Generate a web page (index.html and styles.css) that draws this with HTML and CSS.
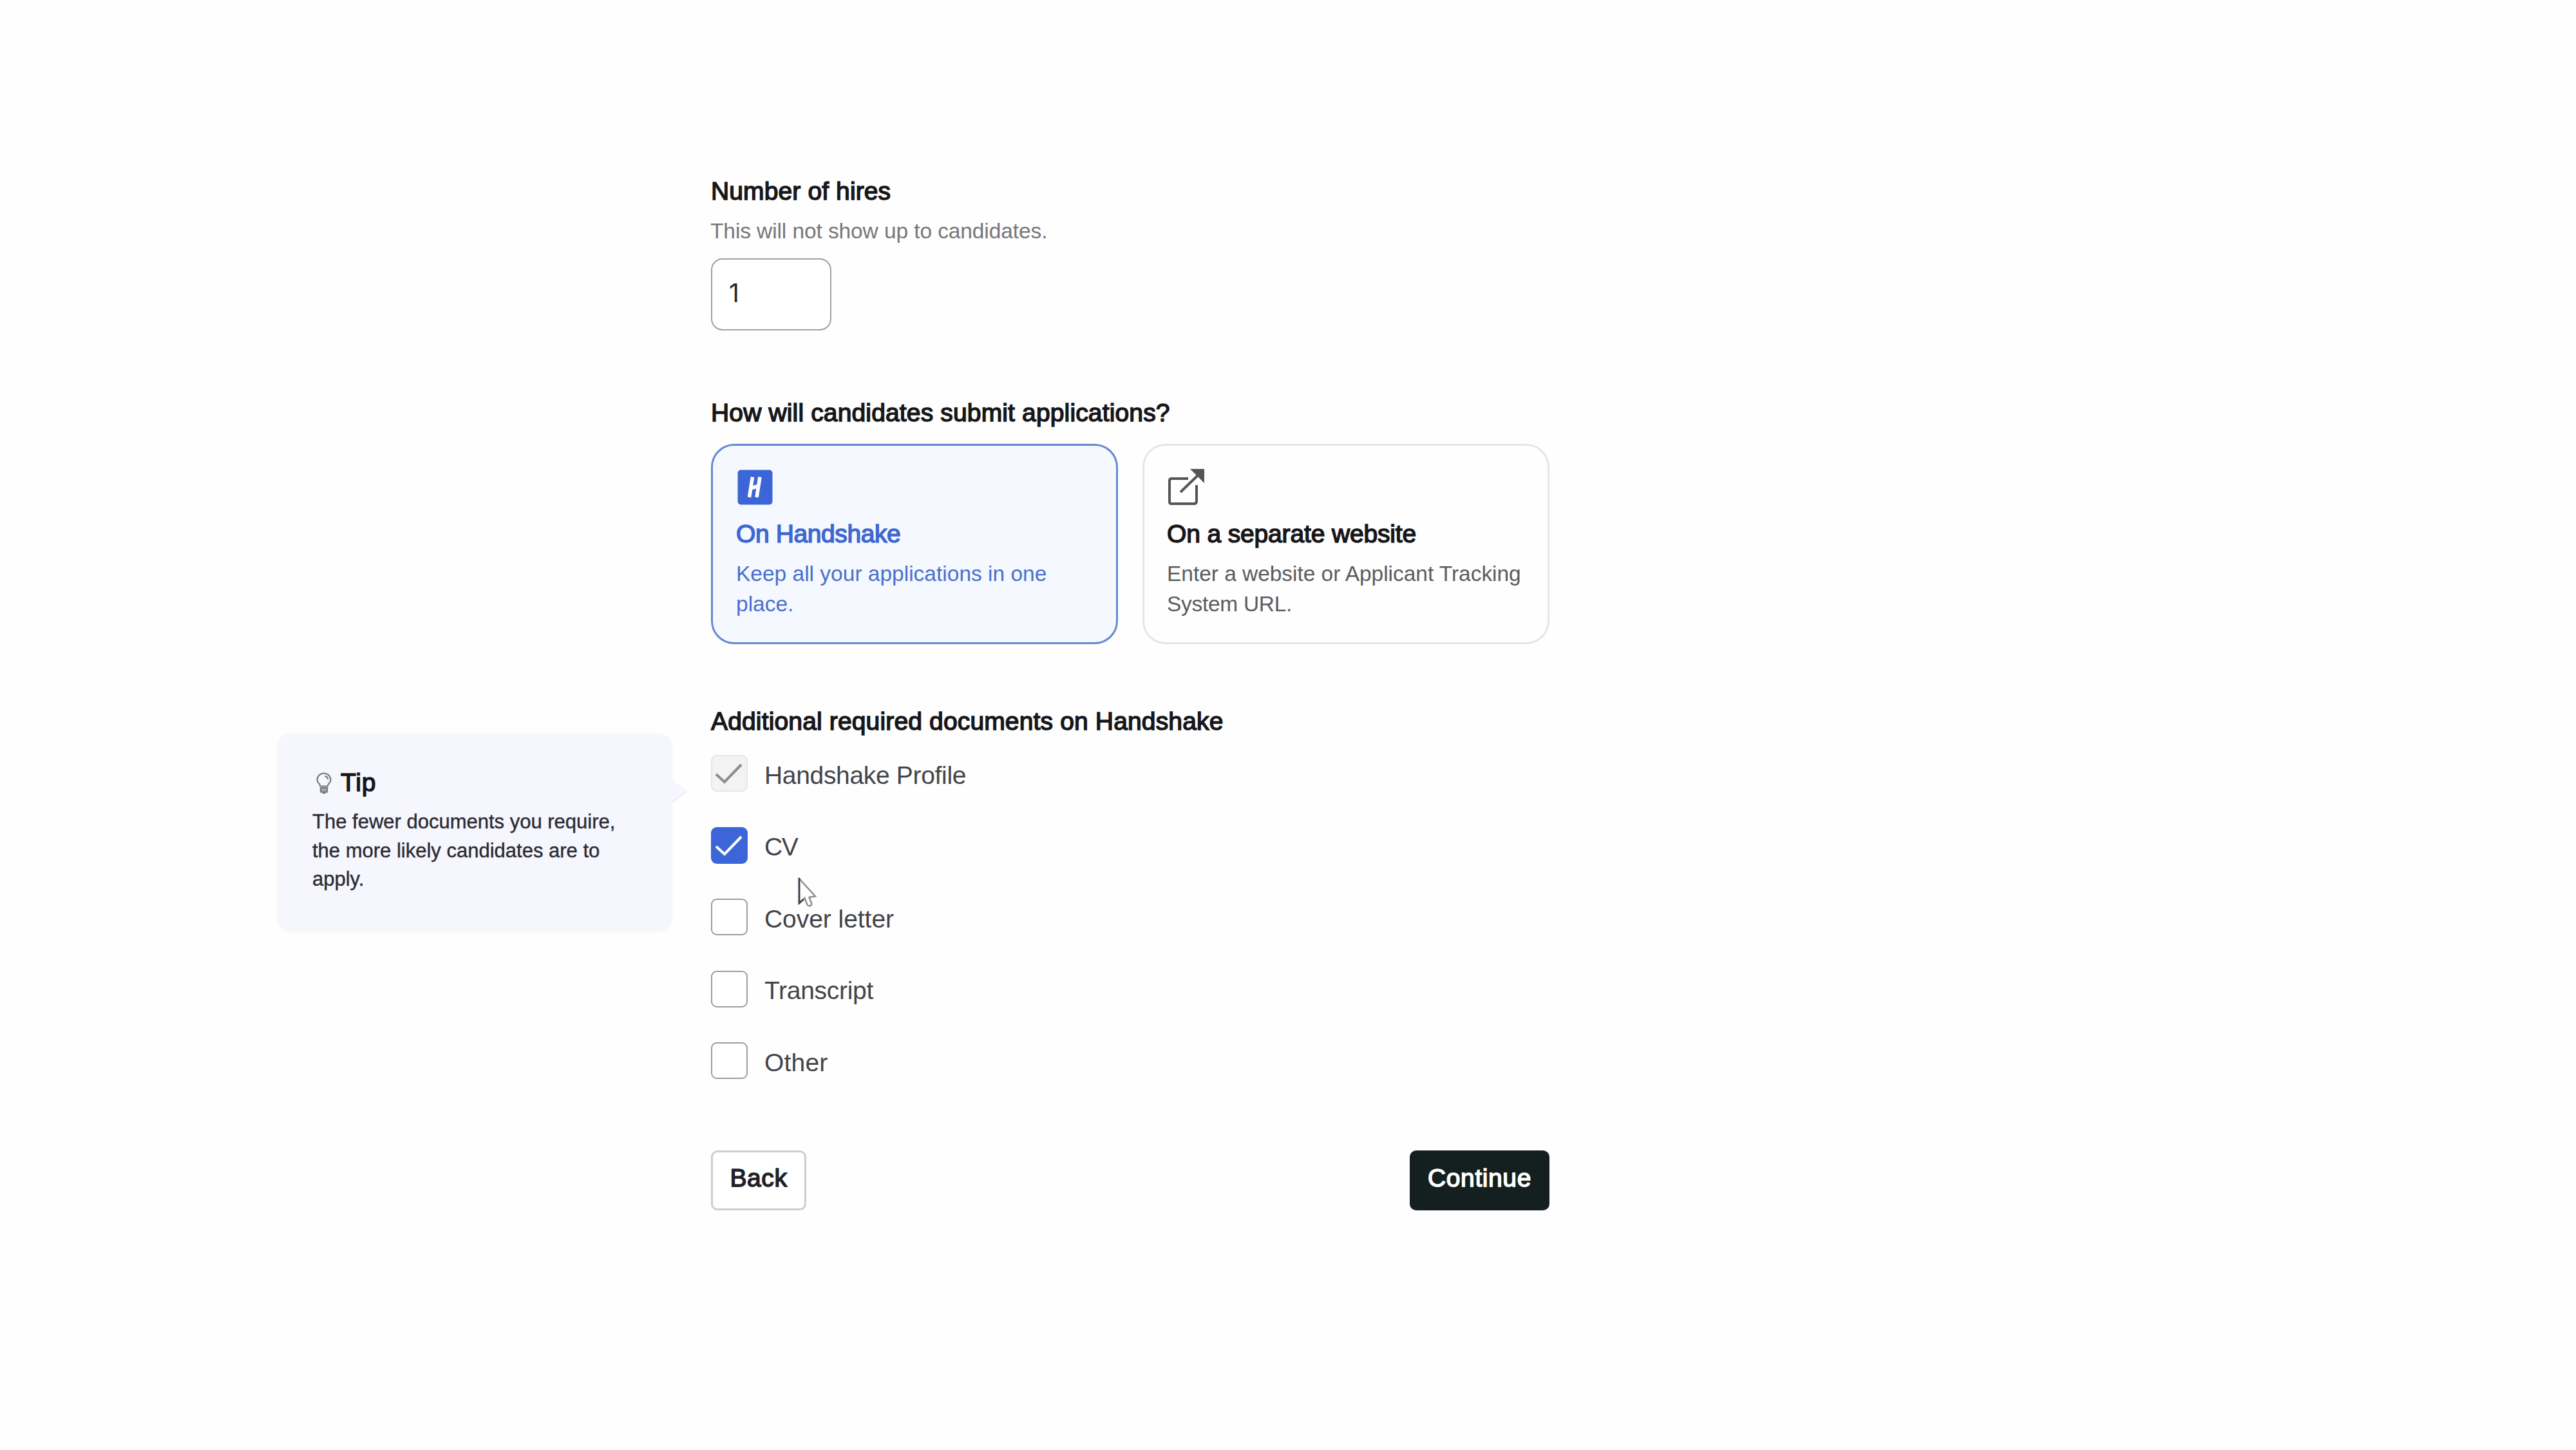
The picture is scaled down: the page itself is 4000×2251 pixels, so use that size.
FILE: index.html
```html
<!DOCTYPE html>
<html lang="en">
<head>
<meta charset="utf-8">
<title>Job posting</title>
<link rel="stylesheet" href="styles.css">
</head>
<body>
<main class="page">
  <aside class="tip">
    <div class="tip-heading">
      <svg class="bulb" viewBox="0 0 28 34" fill="none" stroke="#77777f" stroke-width="2.2">
        <path d="M8.5 21.5C8 18 3.5 16 3.5 11.5a10.500 10 0 0 1 21 0c0 4.500-4.500 6.500-5 10z"/>
        <path d="M15 6c3 0 5 2 5 5"/>
        <path d="M9 24h10v6.500H9z" fill="#a5a5ad"/>
        <path d="M11.500 32h5"/>
      </svg>
      <h3 class="tip-title">Tip</h3>
    </div>
    <p class="tip-text">The fewer documents you require, the more likely candidates are to apply.</p>
    <svg class="tip-arrow" viewBox="0 0 26 44"><path d="M0 0L25 20L0 40z" fill="#f6f6fe"/><path d="M25 20L0 40" stroke="#ececf3" stroke-width="2"/></svg>
  </aside>

  <form class="form">
    <label class="heading hires">Number of hires</label>
    <p class="hint">This will not show up to candidates.</p>
    <div class="number-input">1</div>

    <h2 class="heading method">How will candidates submit applications?</h2>
    <div class="cards">
      <div class="card selected">
        <svg class="card-icon" viewBox="0 0 60 60">
          <rect x="2.500" y="3.500" width="54" height="54" rx="5" fill="#3c66d8"/>
          <path d="M25.500 14.500L20.500 46M37 14.500L32 46M22.500 32L36 28" stroke="#fff" stroke-width="5.600" fill="none"/>
        </svg>
        <h3 class="card-title on-handshake">On Handshake</h3>
        <p class="card-text">Keep all your applications in one place.</p>
      </div>
      <div class="card">
        <svg class="card-icon" viewBox="0 0 60 60" fill="none" stroke="#555" stroke-width="4">
          <path d="M32 17H6.500Q3 17 3 20V53Q3 56 6 56H41Q45 56 45 52V27"/>
          <path d="M20 38L48 11"/>
          <path d="M35 2H57V24z" fill="#555" stroke="none"/>
        </svg>
        <h3 class="card-title separate">On a separate website</h3>
        <p class="card-text website-text">Enter a website or Applicant Tracking <span class="system-url">System URL.</span></p>
      </div>
    </div>

    <h2 class="heading documents">Additional required documents on Handshake</h2>
    <div class="options">
      <div class="option">
        <span class="box locked"><svg viewBox="0 0 57 57"><path d="M8 30L21 42L47 15"/></svg></span>
        <span class="option-label profile">Handshake Profile</span>
      </div>
      <div class="option">
        <span class="box checked"><svg viewBox="0 0 57 57"><path d="M8 30L21 42L47 15"/></svg></span>
        <span class="option-label cv">CV</span>
      </div>
      <div class="option">
        <span class="box"></span>
        <span class="option-label cover">Cover letter</span>
      </div>
      <div class="option">
        <span class="box"></span>
        <span class="option-label transcript">Transcript</span>
      </div>
      <div class="option">
        <span class="box"></span>
        <span class="option-label other">Other</span>
      </div>
    </div>

    <div class="actions">
      <button type="button" class="button back">Back</button>
      <button type="button" class="button continue">Continue</button>
    </div>
  </form>
</main>
<svg class="cursor" viewBox="0 0 30 48"><path d="M2 2V40L10.500 32L14.500 42.500Q16 45 19 44T21 40L17.500 31L27 29.500z" fill="#fff" stroke="#8b8b91" stroke-width="2.400"/><path d="M2 1V40L9 34" fill="none" stroke="#3c3c4a" stroke-width="2.800"/></svg>
</body>
</html>
```
FILE: styles.css
```css
* { box-sizing: border-box; }

body {
  margin: 0;
  background: #fefefe;
  color: #17171a;
  font-family: "Liberation Sans", Arial, sans-serif;
}

h2, h3, p { margin: 0; font-weight: 400; }

.page {
  display: grid;
  grid-template-columns: 610px 1302px;
  column-gap: 62px;
  align-items: start;
  width: 4000px;
  height: 2251px;
  padding: 272px 0 0 432px;
}

/* Tip callout */
.tip {
  position: relative;
  height: 304px;
  margin-top: 868px;
  padding: 50px 54px 0;
  border-radius: 18px;
  background: #f6f6fe;
  box-shadow: 0 1px 6px rgba(40, 40, 80, 0.06);
}
.tip-heading { display: flex; align-items: center; gap: 12px; height: 50px; }
.bulb { width: 28px; height: 34px; margin: 2px -3px 0 3px; }
.tip-heading, .heading, .card-title, .button {
  font-size: 39px;
  line-height: 50px;
  -webkit-text-stroke: 1.5px currentColor;
}
.tip-title { font-size: 39px; margin-left: 3px; letter-spacing: 0.9px; }
.tip-text { margin: 14px 0 0 -1px; color: #2b2b32; font-size: 31px; line-height: 44.5px; -webkit-text-stroke: 0.4px currentColor; }
.tip-arrow { position: absolute; left: 609px; top: 68px; width: 26px; height: 44px; }

/* Form */
.form { display: flex; flex-direction: column; }
.heading { white-space: nowrap; }
.hires { letter-spacing: 0.12px; }
.hint { margin: 14px 0 0 -1px; color: #77777a; font-size: 33.5px; line-height: 46px; letter-spacing: -0.1px; }
.number-input {
  width: 187px;
  height: 112px;
  margin-top: 19px;
  padding: 27px 0 0 26px;
  border: 2.5px solid #a0a0a0;
  border-radius: 18px;
  background: #fff;
  color: #26262a;
  font-family: Inter, "Liberation Sans", sans-serif;
  font-size: 39px;
  line-height: 50px;
}
.method { margin-top: 103px; letter-spacing: 0.15px; }

.cards { display: grid; grid-template-columns: 632px 632px; column-gap: 38px; margin-top: 23px; }
.card {
  height: 311px;
  padding: 34px 30px 0 36px;
  border: 3px solid #e6e6e8;
  border-radius: 36px;
  color: #17171a;
}
.card-icon { display: block; width: 60px; height: 60px; }
.card-title { margin-top: 18px; }
.on-handshake { letter-spacing: -0.4px; }
.separate { margin-left: -1px; letter-spacing: -0.15px; }
.card-text { margin-top: 14px; color: #5c5c60; font-size: 33.5px; line-height: 46.5px; }
.website-text { margin-left: -1px; letter-spacing: -0.04px; }
.system-url { letter-spacing: -0.3px; }
.selected { border-color: #648ad0; background: #f5f8fe; color: #3e68d0; }
.selected .card-text { color: #4a70cc; }

.documents { margin-top: 95px; letter-spacing: 0.15px; }
.options { display: grid; row-gap: 54.5px; margin-top: 27px; }
.option { display: flex; align-items: center; gap: 26px; height: 57px; }
.box { flex: none; width: 57px; height: 57px; border: 2.5px solid #9d9d9f; border-radius: 9px; background: #fff; }
.box svg { display: block; width: 57px; height: 57px; fill: none; stroke-width: 4; }
.locked { border: 0; background: #f3f3f3; box-shadow: inset 0 0 0 2px #e6e6e6; }
.locked svg { stroke: #8d8d8d; }
.checked { border: 0; background: #3c66d8; }
.checked svg { stroke: #fff; }
.option-label { padding-top: 6px; color: #444448; font-size: 39px; line-height: 50px; }
.profile { letter-spacing: -0.33px; }
.cv { letter-spacing: -1.5px; }
.cover { letter-spacing: -0.05px; }
.transcript { letter-spacing: -0.3px; }
.other { letter-spacing: 0.2px; }

.actions { display: flex; justify-content: space-between; margin-top: 111px; }
.button {
  height: 93px;
  padding: 0 0 7px;
  border: 3px solid #cdcdd2;
  border-radius: 10px;
  background: #fff;
  color: #202028;
  font-family: inherit;
  letter-spacing: 0.6px;
}
.back { width: 148px; }
.continue { width: 217px; border-color: #141f20; background: #141f20; color: #fff; }

/* Pointer over the page */
.cursor { position: absolute; left: 1239px; top: 1362px; width: 30px; height: 48px; }
```
